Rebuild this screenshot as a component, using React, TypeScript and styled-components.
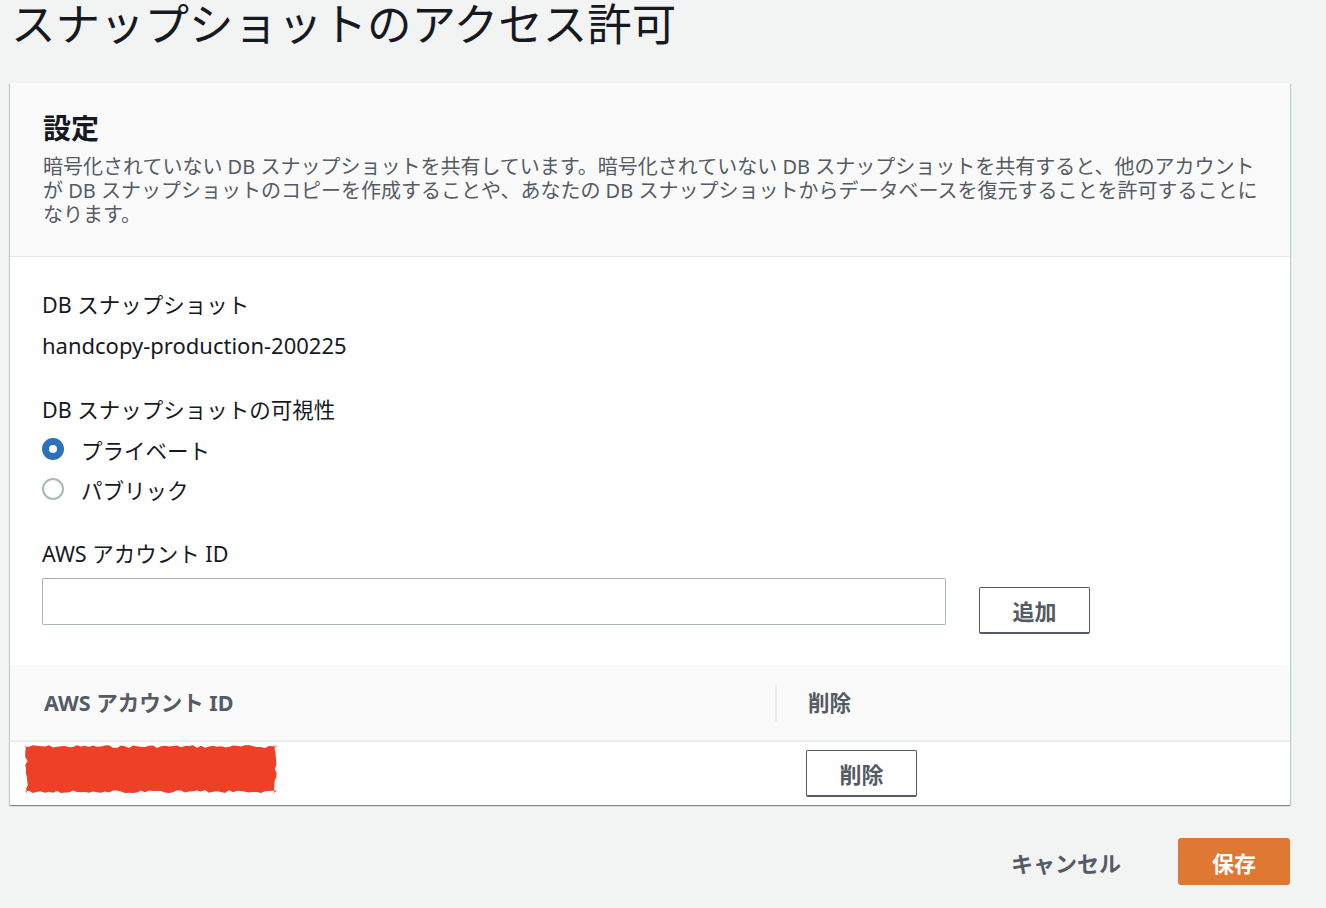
import React from "react";
import styled, { createGlobalStyle } from "styled-components";

const GlobalStyle = createGlobalStyle`
  html, body {
    margin: 0;
    padding: 0;
    background: #f2f3f3;
  }
  body {
    font-family: "Noto Sans", "Noto Sans CJK JP", sans-serif;
    color: #16191f;
  }
  * {
    box-sizing: border-box;
  }
`;

const Page = styled.div`
  width: 1326px;
  height: 908px;
  padding: 0 36px 0 10px;
  overflow: hidden;
`;

const Title = styled.h1`
  margin: -4px 0 35px 1px;
  font-family: "Noto Sans CJK JP", sans-serif;
  font-size: 44.5px;
  line-height: 52px;
  font-weight: 400;
  color: #16191f;
`;

const Panel = styled.section`
  background: #ffffff;
  box-shadow: 0 1px 1px 0 rgba(0, 28, 36, 0.3), 1px 1px 1px 0 rgba(0, 28, 36, 0.15),
    -1px 1px 1px 0 rgba(0, 28, 36, 0.15);
`;

const PanelHeader = styled.header`
  background: #fafafa;
  padding: 28px 25px 29px 33px;
  border-bottom: 1px solid #e4e7e7;
`;

const HeaderTitle = styled.h2`
  margin: 0;
  font-size: 28px;
  line-height: 34px;
  font-weight: 700;
  color: #16191f;
`;

const Description = styled.p`
  margin: 10px 0 0;
  font-size: 20px;
  line-height: 24px;
  color: #545b64;
`;

const PanelBody = styled.div`
  padding: 36px 33px 31px 32px;
`;

const FieldLabel = styled.div<{ $gap?: number }>`
  margin-top: ${(p) => p.$gap ?? 0}px;
  font-size: 21.5px;
  line-height: 24px;
  color: #16191f;
`;

const FieldValue = styled.div`
  margin-top: 16px;
  font-size: 22px;
  line-height: 24px;
  color: #16191f;
`;

const RadioGroup = styled.div`
  margin-top: 7px;
  display: flex;
  flex-direction: column;
`;

const RadioRow = styled.label`
  height: 40px;
  display: flex;
  align-items: center;
  gap: 17px;
  font-size: 21.5px;
  color: #16191f;
`;

const RadioDot = styled.span<{ $checked?: boolean }>`
  width: 22px;
  height: 22px;
  border-radius: 50%;
  display: flex;
  align-items: center;
  justify-content: center;
  background: ${(p) => (p.$checked ? "#2c72b8" : "#ffffff")};
  border: ${(p) => (p.$checked ? "none" : "2px solid #aab7b8")};

  &::after {
    content: "";
    display: ${(p) => (p.$checked ? "block" : "none")};
    width: 8px;
    height: 8px;
    border-radius: 50%;
    background: #ffffff;
  }
`;

const InputRow = styled.div`
  margin-top: 12px;
  display: flex;
  align-items: flex-start;
  gap: 33px;
`;

const TextInput = styled.input`
  width: 904px;
  height: 47px;
  border: 1px solid #aab7b8;
  border-top-color: #a0adae;
  border-radius: 2px;
  padding: 0 14px;
  font-size: 20px;
  font-family: inherit;
  background: #ffffff;
  outline: none;
`;

const OutlineButton = styled.button<{ $offset?: number }>`
  margin-top: ${(p) => p.$offset ?? 0}px;
  width: 111px;
  height: 47px;
  border: 1px solid #545b64;
  border-bottom-width: 2px;
  border-radius: 2px;
  background: #ffffff;
  color: #545b64;
  font-family: inherit;
  font-size: 22px;
  font-weight: 700;
  cursor: pointer;
`;

const TableHead = styled.div`
  display: grid;
  grid-template-columns: 765px 1fr;
  align-items: center;
  height: 77px;
  background: #fafafa;
  border-bottom: 2px solid #eaeded;
`;

const HeadCell = styled.div<{ $divider?: boolean }>`
  line-height: 38px;
  padding-left: ${(p) => (p.$divider ? 31 : 34)}px;
  border-left: ${(p) => (p.$divider ? "2px solid #eaeded" : "none")};
  font-size: 21.5px;
  font-weight: 700;
  color: #545b64;
`;

const BodyRow = styled.div`
  display: grid;
  grid-template-columns: 765px 1fr;
  height: 63px;
`;

const BodyCell = styled.div<{ $pad: number; $top: number }>`
  padding-left: ${(p) => p.$pad}px;
  padding-top: ${(p) => p.$top}px;
`;

const Redaction = styled.svg`
  display: block;
`;

const Footer = styled.div`
  margin-top: 33px;
  display: flex;
  justify-content: flex-end;
  gap: 29px;
`;

const LinkButton = styled.button`
  height: 47px;
  padding: 0 28px;
  border: none;
  background: transparent;
  color: #545b64;
  font-family: inherit;
  font-size: 22px;
  font-weight: 700;
  cursor: pointer;
`;

const PrimaryButton = styled.button`
  width: 112px;
  height: 47px;
  border: none;
  border-radius: 3px;
  background: #df7833;
  color: #ffffff;
  font-family: inherit;
  font-size: 22px;
  font-weight: 700;
  cursor: pointer;
`;

function raggedPath(w: number, h: number) {
  let seed = 7;
  const rnd = () => {
    seed = (seed * 9301 + 49297) % 233280;
    return seed / 233280;
  };
  const pts: string[] = [];
  for (let x = 0; x <= w; x += 4) pts.push(`${x},${(rnd() * 3).toFixed(1)}`);
  for (let y = 0; y <= h; y += 4) pts.push(`${(w - rnd() * 3).toFixed(1)},${y}`);
  for (let x = w; x >= 0; x -= 4) pts.push(`${x},${(h - rnd() * 3).toFixed(1)}`);
  for (let y = h; y >= 0; y -= 4) pts.push(`${(rnd() * 3).toFixed(1)},${y}`);
  return pts.join(" ");
}

export default function App() {
  const redW = 252;
  const redH = 48;
  return (
    <Page>
      <GlobalStyle />
      <Title>スナップショットのアクセス許可</Title>
      <Panel>
        <PanelHeader>
          <HeaderTitle>設定</HeaderTitle>
          <Description>
            暗号化されていない DB スナップショットを共有しています。暗号化されていない DB スナップショットを共有すると、他のアカウントが DB スナップショットのコピーを作成することや、あなたの DB スナップショットからデータベースを復元することを許可することになります。
          </Description>
        </PanelHeader>
        <PanelBody>
          <FieldLabel>DB スナップショット</FieldLabel>
          <FieldValue>handcopy-production-200225</FieldValue>

          <FieldLabel $gap={41}>DB スナップショットの可視性</FieldLabel>
          <RadioGroup>
            <RadioRow>
              <RadioDot $checked />
              プライベート
            </RadioRow>
            <RadioRow>
              <RadioDot />
              パブリック
            </RadioRow>
          </RadioGroup>

          <FieldLabel $gap={33}>AWS アカウント ID</FieldLabel>
          <InputRow>
            <TextInput type="text" />
            <OutlineButton $offset={9}>追加</OutlineButton>
          </InputRow>
        </PanelBody>

        <TableHead>
          <HeadCell>AWS アカウント ID</HeadCell>
          <HeadCell $divider>削除</HeadCell>
        </TableHead>
        <BodyRow>
          <BodyCell $pad={15} $top={3}>
            <Redaction width={redW} height={redH} viewBox={`0 0 ${redW} ${redH}`}>
              <polygon points={raggedPath(redW, redH)} fill="#ee4026" />
            </Redaction>
          </BodyCell>
          <BodyCell $pad={31} $top={8}>
            <OutlineButton>削除</OutlineButton>
          </BodyCell>
        </BodyRow>
      </Panel>
      <Footer>
        <LinkButton>キャンセル</LinkButton>
        <PrimaryButton>保存</PrimaryButton>
      </Footer>
    </Page>
  );
}
